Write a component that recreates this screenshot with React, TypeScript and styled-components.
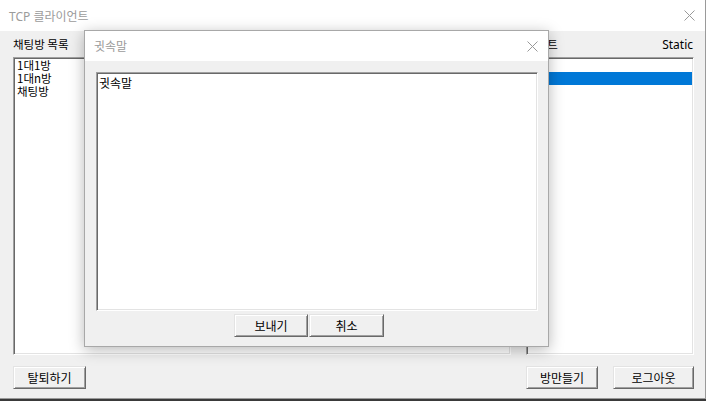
import React from 'react'
import styled, { createGlobalStyle } from 'styled-components'

const GlobalStyle = createGlobalStyle`
  html, body {
    margin: 0;
    padding: 0;
    background: #3a3a3a;
  }
  body {
    font-family: "Noto Sans CJK KR", "Noto Sans", sans-serif;
    font-size: 12px;
  }
`

const Window = styled.div`
  position: relative;
  width: 705px;
  height: 398px;
  border-right: 1px solid #9a9a9a;
  border-bottom: 1px solid #9a9a9a;
  background: #f0f0f0;
  display: flex;
  flex-direction: column;
  overflow: hidden;
`

const TitleBar = styled.div<{ $height: number }>`
  height: ${(p) => p.$height}px;
  flex: none;
  background: #fff;
  display: flex;
  align-items: center;
  justify-content: space-between;
  padding: 0 10px 0 9px;
  box-sizing: border-box;
`

const TitleText = styled.span`
  font-family: "Noto Sans", "Noto Sans CJK KR", sans-serif;
  font-size: 12px;
  color: #9b9b9b;
`

const CloseIcon = () => (
  <svg width="11" height="11" viewBox="0 0 11 11">
    <path d="M0.5 0.5 L10.5 10.5 M10.5 0.5 L0.5 10.5" stroke="#999" strokeWidth="1" fill="none" />
  </svg>
)

const Client = styled.div`
  flex: 1;
  display: grid;
  grid-template-columns: 498px 168px;
  column-gap: 15px;
  padding: 6px 11px 9px 13px;
  min-height: 0;
`

const Column = styled.div`
  display: flex;
  flex-direction: column;
  min-height: 0;
`

const Header = styled.div`
  height: 15px;
  line-height: 15px;
  margin-bottom: 5px;
  display: flex;
  justify-content: space-between;
  color: #000;
  font-size: 11.5px;
`

const StaticText = styled.span`
  font-family: "Noto Sans", sans-serif;
  font-size: 12px;
  padding-right: 1px;
`

const Sunken = styled.div`
  background: #fff;
  border: 1px solid;
  border-color: #a0a0a0 #fff #fff #a0a0a0;
  box-shadow: inset 1px 1px #696969, inset -1px -1px #e3e3e3;
  box-sizing: border-box;
`

const ListBox = styled(Sunken)`
  flex: 1;
  min-height: 0;
  padding: 1px;
`

const Item = styled.div<{ $selected?: boolean }>`
  height: 13px;
  line-height: 13px;
  padding-left: 2px;
  font-size: 11.5px;
  color: ${(p) => (p.$selected ? '#fff' : '#000')};
  background: ${(p) => (p.$selected ? '#0078d7' : 'transparent')};
  white-space: nowrap;
`

const ButtonRow = styled.div<{ $gap?: number }>`
  display: flex;
  gap: ${(p) => p.$gap ?? 0}px;
  margin-top: 11px;
`

const Button = styled.button<{ $width: number }>`
  width: ${(p) => p.$width}px;
  height: 23px;
  padding: 0;
  background: #f0f0f0;
  border: 1px solid;
  border-color: #e3e3e3 #696969 #696969 #e3e3e3;
  box-shadow: inset 1px 1px #fff, inset -1px -1px #a0a0a0;
  font-family: "Noto Sans CJK KR", sans-serif;
  font-size: 12px;
  color: #000;
`

// whisper dialog floats above the main window
const Dialog = styled.div`
  position: absolute;
  left: 84px;
  top: 30px;
  width: 465px;
  height: 317px;
  box-sizing: border-box;
  border: 1px solid #a8a8a8;
  background: #f0f0f0;
  box-shadow: 0 3px 14px rgba(0, 0, 0, 0.28);
  display: flex;
  flex-direction: column;
`

const DialogBody = styled.div`
  flex: 1;
  display: flex;
  flex-direction: column;
  padding: 11px 10px 0 11px;
`

const EditBox = styled(Sunken)`
  height: 239px;
  padding: 3px 2px;
  line-height: 14px;
  font-size: 12px;
  color: #000;
`

const DialogButtons = styled.div`
  display: flex;
  gap: 1px;
  padding-left: 138px;
  margin-top: 3px;
`

export default function App() {
  return (
    <>
      <GlobalStyle />
      <Window>
        <TitleBar $height={31}>
          <TitleText>TCP 클라이언트</TitleText>
          <CloseIcon />
        </TitleBar>
        <Client>
          <Column>
            <Header>채팅방 목록</Header>
            <ListBox>
              <Item>1대1방</Item>
              <Item>1대n방</Item>
              <Item>채팅방</Item>
            </ListBox>
            <ButtonRow>
              <Button $width={73}>탈퇴하기</Button>
            </ButtonRow>
          </Column>
          <Column>
            <Header>
              <span>리스트</span>
              <StaticText>Static</StaticText>
            </Header>
            <ListBox>
              <Item>김</Item>
              <Item $selected>이</Item>
            </ListBox>
            <ButtonRow $gap={15}>
              <Button $width={72}>방만들기</Button>
              <Button $width={81}>로그아웃</Button>
            </ButtonRow>
          </Column>
        </Client>

        <Dialog>
          <TitleBar $height={30}>
            <TitleText>귓속말</TitleText>
            <CloseIcon />
          </TitleBar>
          <DialogBody>
            <EditBox>귓속말</EditBox>
            <DialogButtons>
              <Button $width={74}>보내기</Button>
              <Button $width={75}>취소</Button>
            </DialogButtons>
          </DialogBody>
        </Dialog>
      </Window>
    </>
  )
}
